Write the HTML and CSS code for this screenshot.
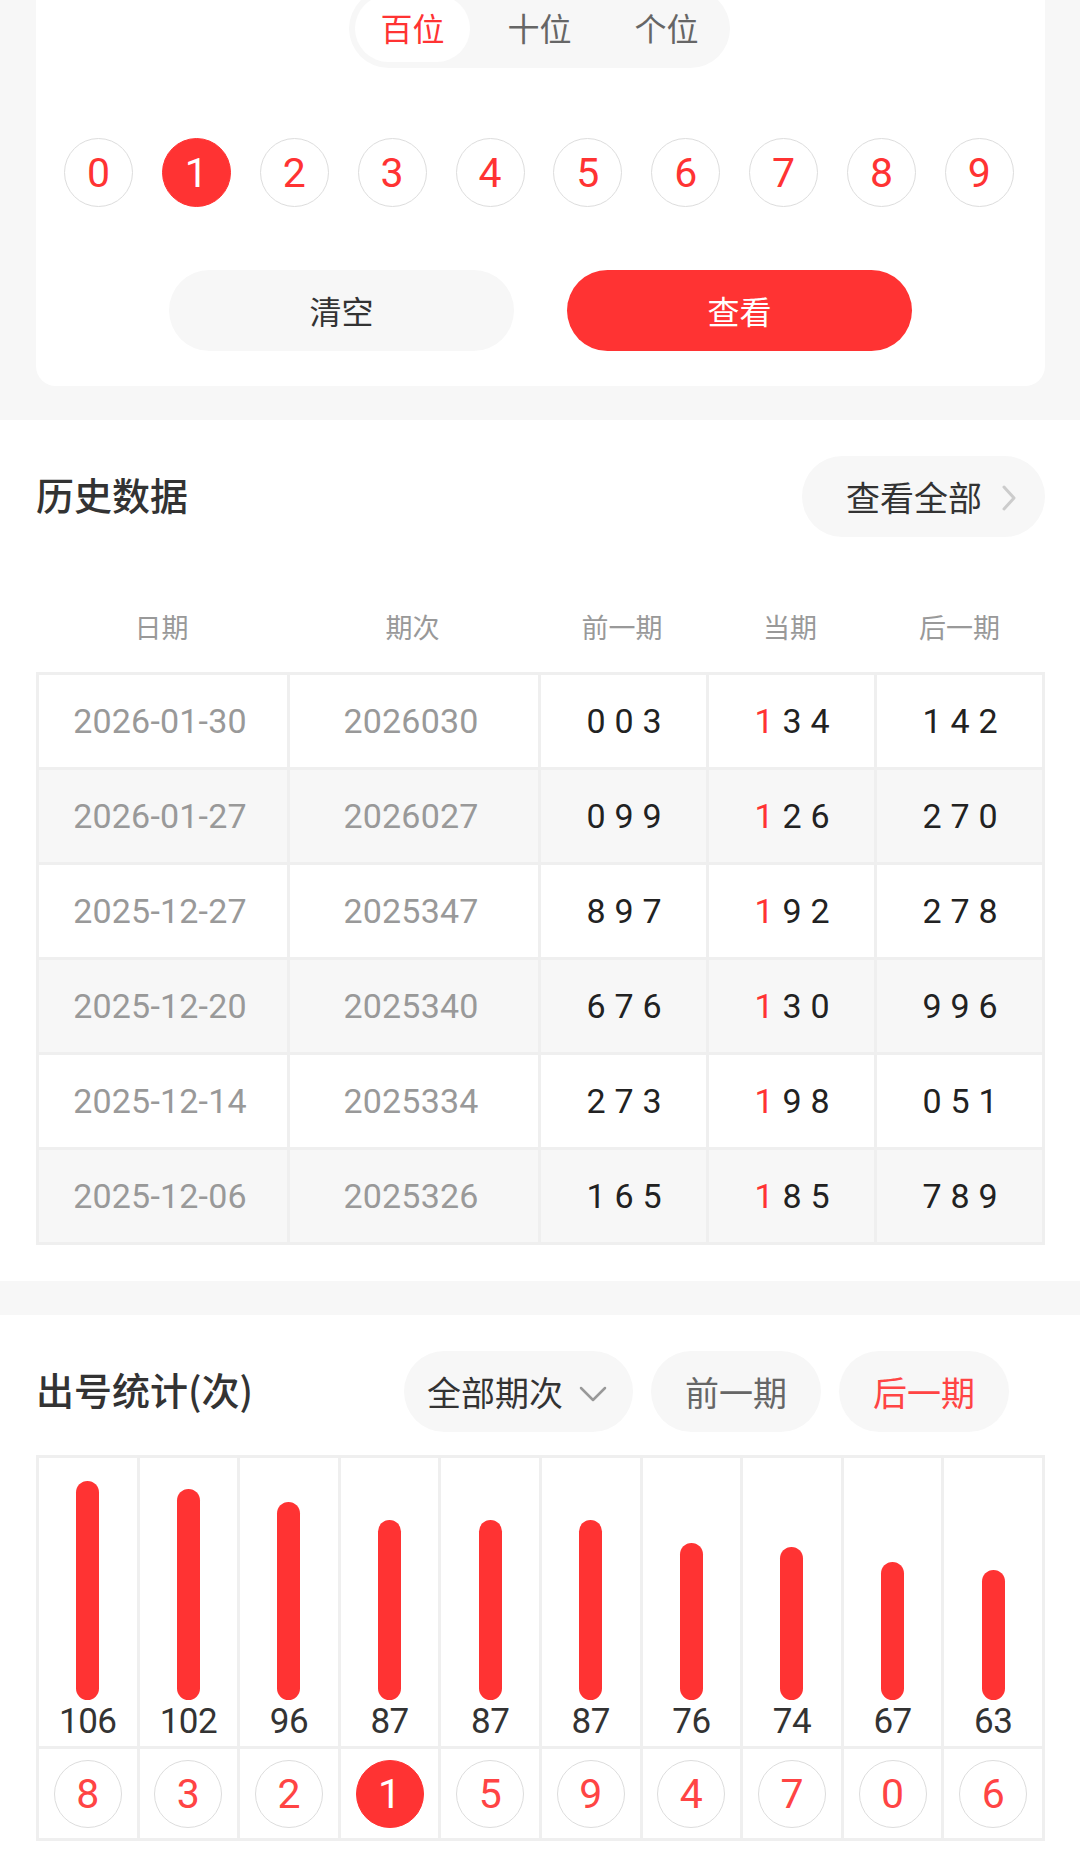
FILE: index.html
```html
<!DOCTYPE html>
<html lang="zh">
<head>
<meta charset="utf-8">
<title>出号统计</title>
<link rel="stylesheet" href="styles.css">
</head>
<body>
<div class="card">
  <div class="seg">
    <div class="seg-tab active">百位</div>
    <div class="seg-tab">十位</div>
    <div class="seg-tab">个位</div>
  </div>
  <div class="digits">
    <div class="ball">0</div>
    <div class="ball on">1</div>
    <div class="ball">2</div>
    <div class="ball">3</div>
    <div class="ball">4</div>
    <div class="ball">5</div>
    <div class="ball">6</div>
    <div class="ball">7</div>
    <div class="ball">8</div>
    <div class="ball">9</div>
  </div>
  <div class="actions">
    <div class="btn btn-clear">清空</div>
    <div class="btn btn-view">查看</div>
  </div>
</div>

<div class="section history">
  <div class="sec-head">
    <div class="sec-title">历史数据</div>
    <div class="more">查看全部<svg class="more-arrow" width="14" height="26" viewBox="0 0 14 26"><path d="M2 2 L12 13 L2 24" fill="none" stroke="#cccccc" stroke-width="3" stroke-linecap="round" stroke-linejoin="round"/></svg></div>
  </div>
  <div class="thead">
    <div>日期</div><div>期次</div><div>前一期</div><div>当期</div><div>后一期</div>
  </div>
  <div class="tbl">
    <div class="c gray">2026-01-30</div><div class="c gray">2026030</div><div class="c num"><i>0</i><i>0</i><i>3</i></div><div class="c num"><i class="r">1</i><i>3</i><i>4</i></div><div class="c num"><i>1</i><i>4</i><i>2</i></div>
    <div class="c gray alt">2026-01-27</div><div class="c gray alt">2026027</div><div class="c num alt"><i>0</i><i>9</i><i>9</i></div><div class="c num alt"><i class="r">1</i><i>2</i><i>6</i></div><div class="c num alt"><i>2</i><i>7</i><i>0</i></div>
    <div class="c gray">2025-12-27</div><div class="c gray">2025347</div><div class="c num"><i>8</i><i>9</i><i>7</i></div><div class="c num"><i class="r">1</i><i>9</i><i>2</i></div><div class="c num"><i>2</i><i>7</i><i>8</i></div>
    <div class="c gray alt">2025-12-20</div><div class="c gray alt">2025340</div><div class="c num alt"><i>6</i><i>7</i><i>6</i></div><div class="c num alt"><i class="r">1</i><i>3</i><i>0</i></div><div class="c num alt"><i>9</i><i>9</i><i>6</i></div>
    <div class="c gray">2025-12-14</div><div class="c gray">2025334</div><div class="c num"><i>2</i><i>7</i><i>3</i></div><div class="c num"><i class="r">1</i><i>9</i><i>8</i></div><div class="c num"><i>0</i><i>5</i><i>1</i></div>
    <div class="c gray alt">2025-12-06</div><div class="c gray alt">2025326</div><div class="c num alt"><i>1</i><i>6</i><i>5</i></div><div class="c num alt"><i class="r">1</i><i>8</i><i>5</i></div><div class="c num alt"><i>7</i><i>8</i><i>9</i></div>
  </div>
</div>

<div class="section stats">
  <div class="sec-head">
    <div class="sec-title">出号统计(次)</div>
    <div class="filters">
      <div class="pill">全部期次<svg class="drop" width="28" height="16" viewBox="0 0 28 16"><path d="M2 2 L14 14 L26 2" fill="none" stroke="#999999" stroke-width="2.5" stroke-linecap="round" stroke-linejoin="round"/></svg></div>
      <div class="pill">前一期</div>
      <div class="pill red">后一期</div>
    </div>
  </div>
  <div class="chart">
    <div class="col"><div class="bar-area"><div class="bar" style="height:219px"></div></div><div class="val">106</div></div>
    <div class="col"><div class="bar-area"><div class="bar" style="height:211px"></div></div><div class="val">102</div></div>
    <div class="col"><div class="bar-area"><div class="bar" style="height:198px"></div></div><div class="val">96</div></div>
    <div class="col"><div class="bar-area"><div class="bar" style="height:180px"></div></div><div class="val">87</div></div>
    <div class="col"><div class="bar-area"><div class="bar" style="height:180px"></div></div><div class="val">87</div></div>
    <div class="col"><div class="bar-area"><div class="bar" style="height:180px"></div></div><div class="val">87</div></div>
    <div class="col"><div class="bar-area"><div class="bar" style="height:157px"></div></div><div class="val">76</div></div>
    <div class="col"><div class="bar-area"><div class="bar" style="height:153px"></div></div><div class="val">74</div></div>
    <div class="col"><div class="bar-area"><div class="bar" style="height:138px"></div></div><div class="val">67</div></div>
    <div class="col"><div class="bar-area"><div class="bar" style="height:130px"></div></div><div class="val">63</div></div>
    <div class="cell-ball"><div class="ball sm">8</div></div>
    <div class="cell-ball"><div class="ball sm">3</div></div>
    <div class="cell-ball"><div class="ball sm">2</div></div>
    <div class="cell-ball"><div class="ball sm on">1</div></div>
    <div class="cell-ball"><div class="ball sm">5</div></div>
    <div class="cell-ball"><div class="ball sm">9</div></div>
    <div class="cell-ball"><div class="ball sm">4</div></div>
    <div class="cell-ball"><div class="ball sm">7</div></div>
    <div class="cell-ball"><div class="ball sm">0</div></div>
    <div class="cell-ball"><div class="ball sm">6</div></div>
  </div>
</div>
</body>
</html>
```

FILE: styles.css
```css
* { box-sizing: border-box; }
html, body { margin: 0; padding: 0; }
body {
  width: 1080px;
  background: #f7f7f7;
  font-family: "Noto Sans CJK SC", "Noto Sans", sans-serif;
  color: #333;
  overflow: hidden;
}

.card {
  margin: -11px 35px 0 36px;
  background: #fff;
  border-radius: 0 0 20px 20px;
  padding-bottom: 35px;
}

.seg {
  width: 381px;
  height: 79px;
  margin-left: 313px;
  background: #f7f7f7;
  border-radius: 40px;
  padding: 6px;
  display: flex;
  gap: 12px;
}
.seg-tab {
  width: 115px;
  height: 67px;
  border-radius: 34px;
  font-size: 32px;
  line-height: 64px;
  text-align: center;
  color: #666;
}
.seg-tab.active { background: #fff; color: #ff3333; }

.digits {
  margin-top: 70px;
  padding: 0 31px 0 28px;
  display: flex;
  justify-content: space-between;
}
.ball {
  width: 69px;
  height: 69px;
  border-radius: 50%;
  border: 1px solid #dddddd;
  display: flex;
  align-items: center;
  justify-content: center;
  font-family: Roboto, "Noto Sans", sans-serif;
  font-size: 41px;
  color: #ff3333;
  background: #fff;
}
.ball.on { background: #ff3333; border-color: #ff3333; color: #fff; }

.actions {
  margin-top: 63px;
  display: flex;
  justify-content: center;
  gap: 53px;
}
.btn {
  width: 345px;
  height: 81px;
  border-radius: 41px;
  font-size: 32px;
  line-height: 81px;
  text-align: center;
}
.btn-clear { background: #f7f7f7; color: #333; }
.btn-view { background: #ff3333; color: #fff; }

.section {
  background: #fff;
  margin-top: 34px;
  padding: 36px 35px 36px 36px;
}
.sec-head {
  display: flex;
  justify-content: space-between;
  align-items: center;
  height: 81px;
}
.sec-title {
  font-size: 38px;
  font-weight: 500;
  color: #333;
  line-height: 1;
  margin-top: -6px;
}
.more {
  height: 81px;
  width: 243px;
  border-radius: 41px;
  background: #f7f7f7;
  display: flex;
  align-items: center;
  padding-left: 44px;
  font-size: 34px;
  color: #333;
}
.more-arrow { margin-left: 20px; margin-top: 2px; }

.thead {
  margin-top: 60px;
  height: 60px;
  display: grid;
  grid-template-columns: 251px 251px 168px 168px 171px;
  font-size: 27px;
  color: #999;
  line-height: 60px;
  text-align: center;
}
.tbl {
  margin-top: 15px;
  display: grid;
  grid-template-columns: 248px 248px 165px 165px 165px;
  grid-auto-rows: 92px;
  gap: 3px;
  padding: 3px;
  background: #efefef;
}
.c {
  background: #fff;
  display: flex;
  align-items: center;
  justify-content: center;
  font-family: Roboto, "Noto Sans", sans-serif;
  font-size: 34px;
}
.c.alt { background: #f7f7f7; }
.c.gray { color: #999; letter-spacing: 0.2px; padding-right: 6px; }
.c.num { color: #222; gap: 10px; }
.c.num i { font-style: normal; width: 18px; text-align: center; }
.c.num i.r { color: #ff3333; }

.stats { margin-top: 34px; padding-bottom: 33px; }
.filters { display: flex; gap: 18px; }
.pill {
  height: 81px;
  border-radius: 41px;
  background: #f7f7f7;
  font-size: 34px;
  color: #666;
  display: flex;
  align-items: center;
  padding: 0 34px;
}
.pill:first-child { padding: 0 26px 0 23px; color: #333; }
.pill.red { color: #ff4444; margin-right: 36px; }
.drop { margin-left: 16px; margin-top: 4px; }

.chart {
  margin-top: 23px;
  display: grid;
  grid-template-columns: repeat(10, 1fr);
  gap: 3px;
  padding: 3px;
  background: #efefef;
}
.col {
  background: #fff;
  height: 288px;
  display: flex;
  flex-direction: column;
}
.bar-area {
  height: 242px;
  display: flex;
  align-items: flex-end;
  justify-content: center;
}
.bar {
  width: 23px;
  border-radius: 12px;
  background: #ff3333;
}
.val {
  height: 46px;
  line-height: 44px;
  text-align: center;
  font-family: Roboto, "Noto Sans", sans-serif;
  font-size: 35px;
  letter-spacing: -0.5px;
  color: #333;
}
.cell-ball {
  background: #fff;
  height: 89px;
  display: flex;
  align-items: center;
  justify-content: center;
}
.ball.sm { width: 68px; height: 68px; font-size: 41px; color: #ff4444; }
.ball.sm.on { color: #fff; }
```
